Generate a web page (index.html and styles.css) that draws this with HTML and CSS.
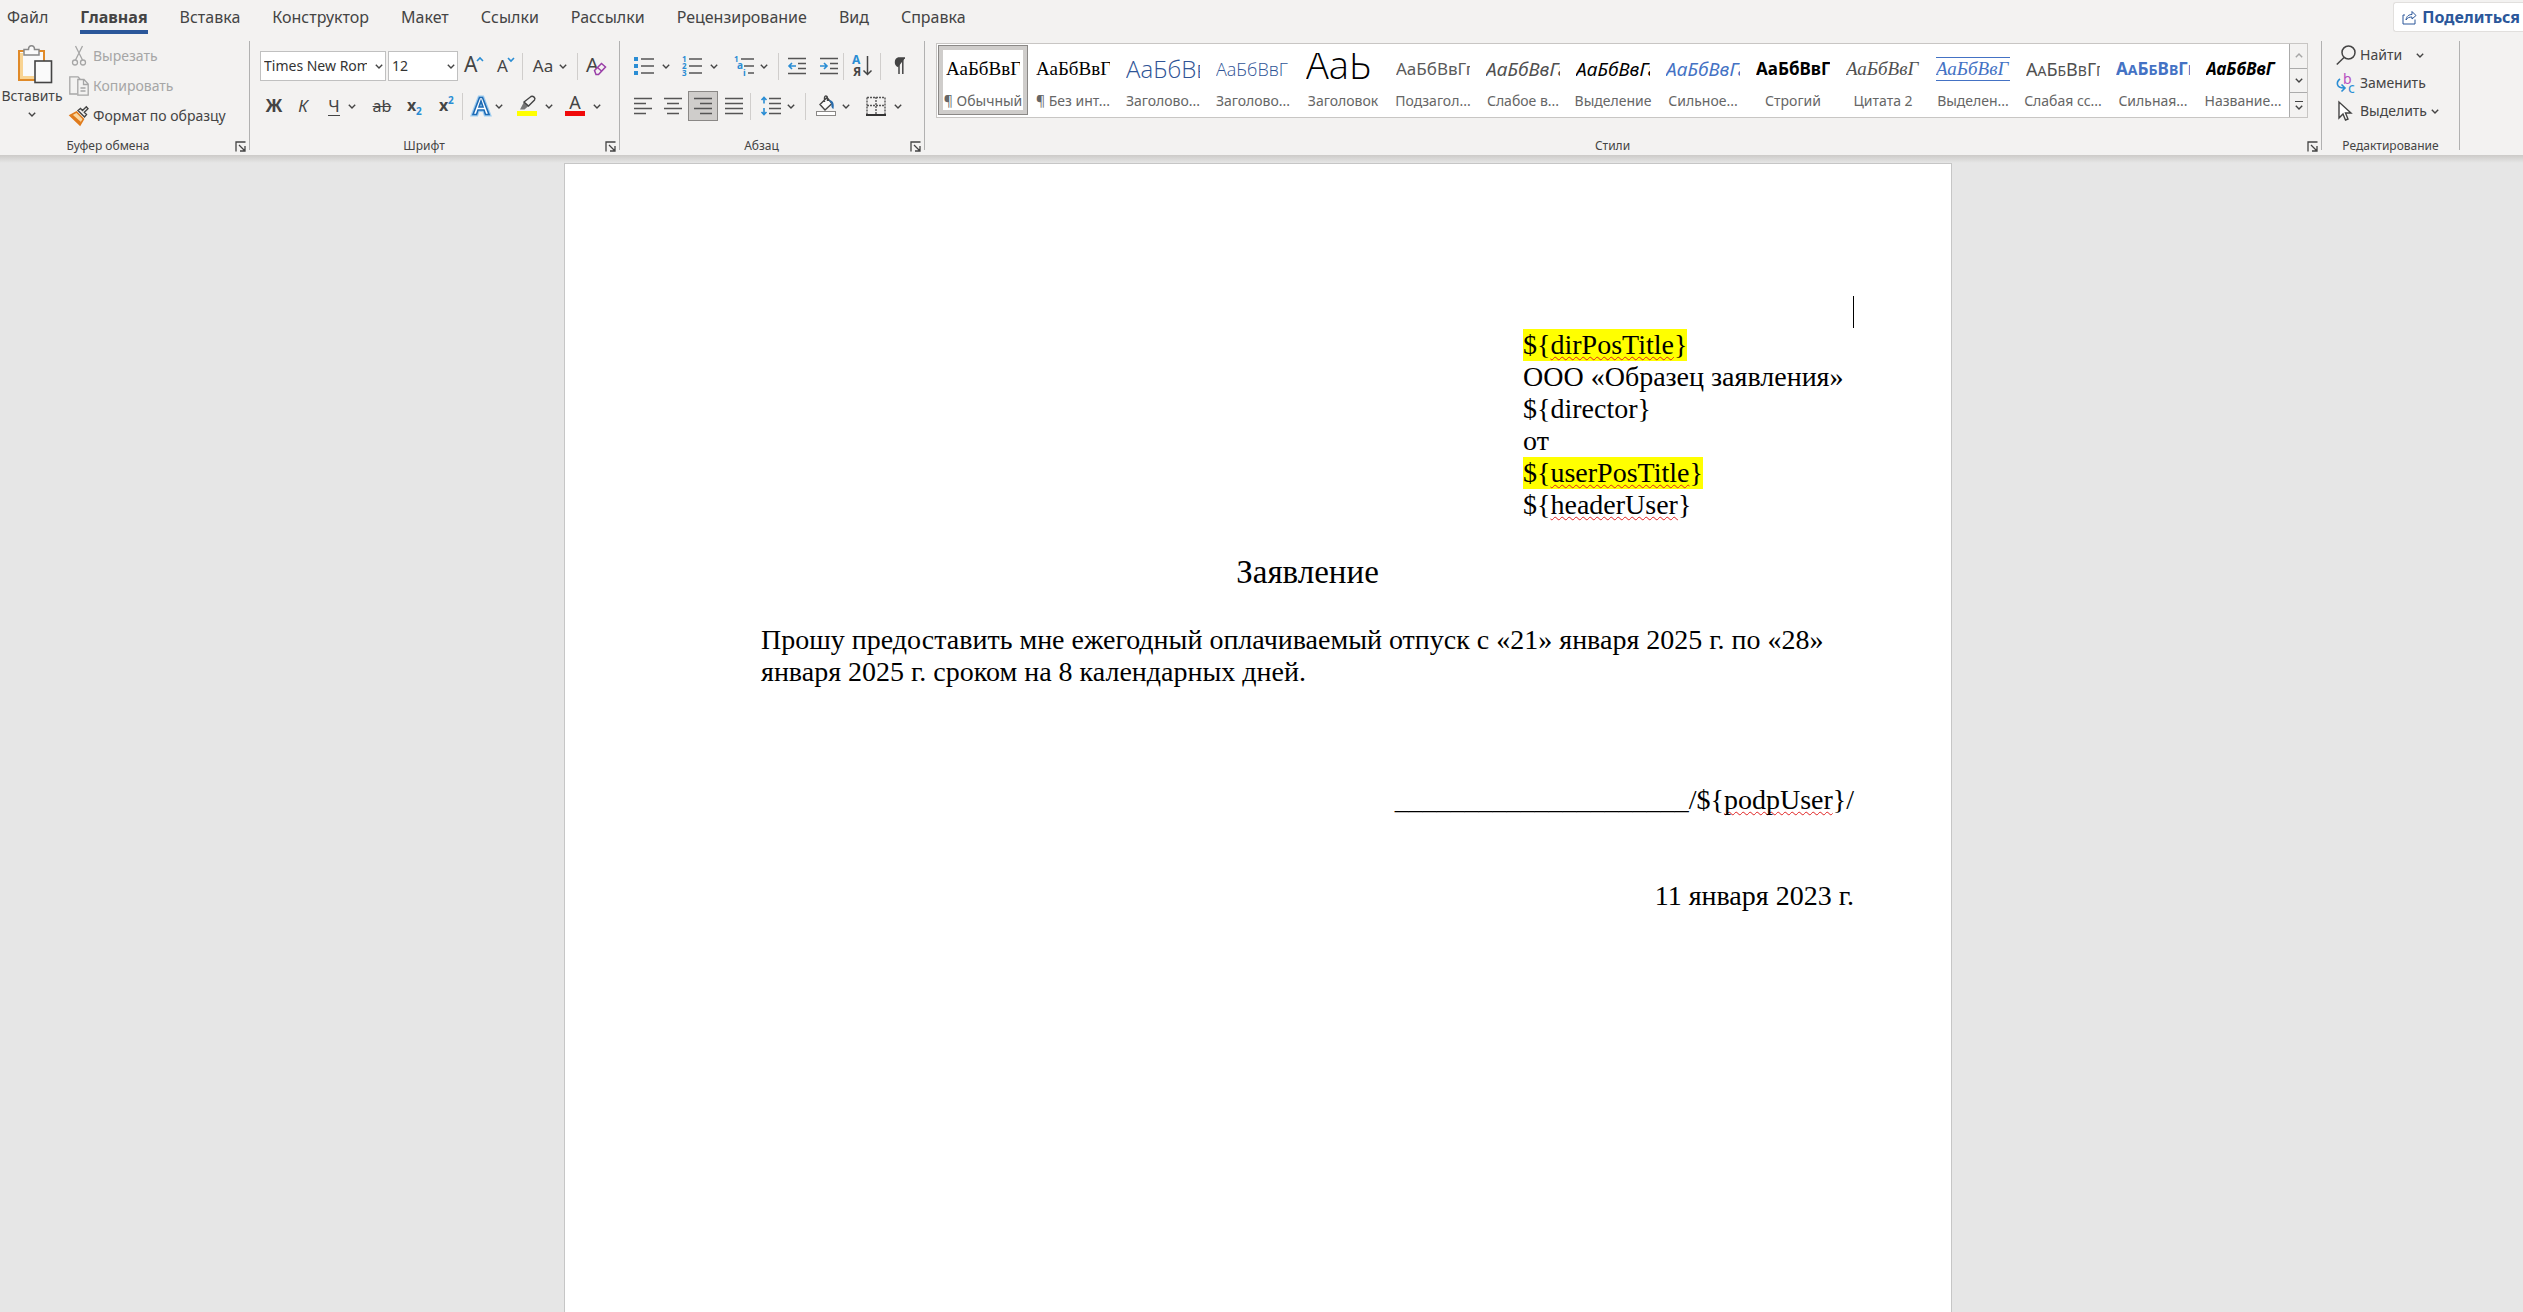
FILE: index.html
```html
<!DOCTYPE html>
<html lang="ru">
<head>
<meta charset="utf-8">
<title>Заявление</title>
<link rel="stylesheet" href="styles.css">
</head>
<body>
<svg class="sprite" aria-hidden="true">
  <symbol id="chev" viewBox="0 0 8 5"><path d="M.8 .8 4 4 7.2 .8" fill="none" stroke="currentColor" stroke-width="1.4"/></symbol>
  <symbol id="launch" viewBox="0 0 11 11"><path d="M1 10.5V1h9.5M4 4l5.500 5.500M10 5v5H5" fill="none" stroke="#444" stroke-width="1.3"/></symbol>
</svg>

<header class="tabs">
  <nav class="tab-list">
    <a href="#file">Файл</a>
    <a href="#home" class="active">Главная</a>
    <a href="#insert">Вставка</a>
    <a href="#design">Конструктор</a>
    <a href="#layout">Макет</a>
    <a href="#refs">Ссылки</a>
    <a href="#mail">Рассылки</a>
    <a href="#review">Рецензирование</a>
    <a href="#view">Вид</a>
    <a href="#help">Справка</a>
  </nav>
  <button class="share" type="button">
    <svg width="15" height="15" viewBox="0 0 15 15" fill="none" stroke="#2b579a"><path d="M3 5H1v9h12V9.500M4 10c.5-4 3-5.500 6-5.500V1.500L14 5.500 10 9V7C7.500 7 5.500 7.500 4 10z"/></svg>
    Поделиться
  </button>
</header>

<div class="ribbon">
  <section class="group clipboard">
    <div class="group-body columns">
      <button class="paste" type="button">
        <svg width="36" height="40" viewBox="0 0 36 40"><rect x="2" y="7" width="25" height="29" fill="#fafafa" stroke="#e08a28" stroke-width="2"/><path d="M4.500 9v24.500H17" fill="none" stroke="#f9d493" stroke-width="3"/><path d="M7 11V5.500h4.500c0-5 6-5 6 0H22V11z" fill="#fafafa" stroke="#888" stroke-width="1.500"/><rect x="18" y="17" width="16.500" height="21.500" fill="#fafafa" stroke="#444" stroke-width="1.600"/></svg>
        <span>Вставить</span>
        <svg class="chev"><use href="#chev"/></svg>
      </button>
      <div class="stack clip-stack">
        <button class="row-btn" type="button" disabled>
          <svg width="20" height="20" viewBox="0 0 20 20" fill="none" stroke="#a6a6a6" stroke-width="1.300"><path d="M6.500 0l7 14M13.500 0l-7 14"/><circle cx="6" cy="16.500" r="2.500"/><circle cx="14" cy="16.500" r="2.500"/></svg>
          Вырезать
        </button>
        <button class="row-btn" type="button" disabled>
          <svg width="20" height="20" viewBox="0 0 20 20" fill="none" stroke="#a6a6a6" stroke-width="1.300"><path d="M8 18H.8V.8H9L11 3M8.800 3.500H15l4.200 4.500v11.200H8.800zM14.500 3.500V8.500h4.500M11.500 12h5M11.500 15h5"/></svg>
          Копировать
        </button>
        <button class="row-btn" type="button">
          <svg width="20" height="20" viewBox="0 0 20 20"><path d="M1 9.500 7.500 6l7 7-3.500 6z" fill="#fbd7a0" stroke="#e07b1c" stroke-width="1.500"/><path d="M1 9.500l10 9.500 1-3-8-7z" fill="#e07b1c"/><path d="M9 4.500l6.500 6.500 2-2.500-2.200-2.200L19 2.800 17.300.8l-3.800 3.700L11.500 2.500z" fill="#f3f2f1" stroke="#444" stroke-width="1.400"/></svg>
          Формат по образцу
        </button>
      </div>
    </div>
    <footer><span>Буфер обмена</span><button class="launcher" type="button" aria-label="Буфер обмена: параметры"><svg><use href="#launch"/></svg></button></footer>
  </section>
  <div class="divider"></div>

  <section class="group">
    <div class="group-body rows font-rows">
      <div class="row">
        <label class="combo combo-font"><select aria-label="Шрифт"><option>Times New Roman</option></select><svg class="chev"><use href="#chev"/></svg></label>
        <label class="combo combo-size"><select aria-label="Размер шрифта"><option>12</option></select><svg class="chev"><use href="#chev"/></svg></label>
        <button class="tool" type="button" aria-label="Увеличить размер"><svg width="22" height="22" viewBox="0 0 22 22"><text class="glyph" x="1" y="17" font-size="21">A</text><path d="M14 6l3-3 3 3" fill="none" stroke="#2a8dd4" stroke-width="1.600"/></svg></button>
        <button class="tool" type="button" aria-label="Уменьшить размер"><svg width="20" height="22" viewBox="0 0 20 22"><text class="glyph" x="1" y="17" font-size="17">A</text><path d="M12 3l3 3 3-3" fill="none" stroke="#2a8dd4" stroke-width="1.600"/></svg></button>
        <i class="sep"></i>
        <button class="tool menu-l" type="button" aria-label="Регистр"><span class="case">Aa</span><svg class="chev"><use href="#chev"/></svg></button>
        <i class="sep"></i>
        <button class="tool tool-l" type="button" aria-label="Очистить формат"><svg width="22" height="22" viewBox="0 0 22 22"><text class="glyph" x="1" y="17" font-size="20">A</text><path d="M9.500 15.500l7-7 4 3.500-7 7.500h-2.500z" fill="#f3f2f1" stroke="#9a3fa8" stroke-width="1.500"/><path d="M12.500 12.500l4 3.500" stroke="#9a3fa8" stroke-width="1.500"/></svg></button>
      </div>
      <div class="row">
        <button class="tool tool-xs letter bold" type="button">Ж</button>
        <button class="tool tool-s letter italic" type="button">К</button>
        <button class="tool menu" type="button"><span class="letter under">Ч</span><svg class="chev"><use href="#chev"/></svg></button>
        <button class="tool strike" type="button">ab</button>
        <button class="tool" type="button" aria-label="Подстрочный"><svg width="18" height="22" viewBox="0 0 18 22"><text class="glyph bold" x="2" y="16" font-size="16">x</text><text class="blue-glyph" x="11" y="20" font-size="10">2</text></svg></button>
        <button class="tool" type="button" aria-label="Надстрочный"><svg width="18" height="22" viewBox="0 0 18 22"><text class="glyph bold" x="2" y="16" font-size="16">x</text><text class="blue-glyph" x="11" y="9" font-size="10">2</text></svg></button>
        <i class="sep"></i>
        <button class="tool menu snug" type="button" aria-label="Текстовые эффекты"><svg width="20" height="22" viewBox="0 0 20 22"><path d="M2 19.500L8.500 2.500h3L18 19.500h-3.500L13 15H7l-1.500 4.500zM8 12h4L10 6z" fill="none" stroke="#9fcdf0" stroke-width="4"/><path d="M2 19.500L8.500 2.500h3L18 19.500h-3.500L13 15H7l-1.500 4.500zM8 12h4L10 6z" fill="#fff" fill-rule="evenodd" stroke="#1e6bb5" stroke-width="1.600"/></svg><svg class="chev"><use href="#chev"/></svg></button>
        <button class="tool menu" type="button" aria-label="Цвет выделения"><svg width="20" height="22" viewBox="0 0 20 22"><rect y="16" width="20" height="5" fill="#ff0"/><path d="M3 14.500l4-7.500 4.500 4-4 3.500z" fill="#777"/><path d="M7 7l7-5.500c2-1 5 1.500 3.500 3.500L11.500 11z" fill="#f3f2f1" stroke="#444" stroke-width="1.400"/></svg><svg class="chev"><use href="#chev"/></svg></button>
        <button class="tool menu" type="button" aria-label="Цвет текста"><svg width="20" height="22" viewBox="0 0 20 22"><text class="glyph" x="10" y="14" text-anchor="middle" font-size="18">A</text><rect y="16" width="20" height="5" fill="#f00a0a"/></svg><svg class="chev"><use href="#chev"/></svg></button>
      </div>
    </div>
    <footer><span>Шрифт</span><button class="launcher" type="button" aria-label="Шрифт: параметры"><svg><use href="#launch"/></svg></button></footer>
  </section>
  <div class="divider"></div>

  <section class="group">
    <div class="group-body rows para-rows">
      <div class="row">
        <button class="tool menu" type="button" aria-label="Маркеры"><svg width="20" height="20" viewBox="0 0 20 20"><path d="M0 1h4v4H0zM0 8h4v4H0zM0 15h4v4H0z" fill="#2a8dd4"/><path d="M7 3h13M7 10h13M7 17h13" stroke="#555" stroke-width="1.500"/></svg><svg class="chev"><use href="#chev"/></svg></button>
        <button class="tool menu" type="button" aria-label="Нумерация"><svg width="20" height="22" viewBox="0 0 20 22"><g class="blue-glyph" font-size="8"><text x="0" y="7">1</text><text x="0" y="14">2</text><text x="0" y="21">3</text></g><path d="M7 4h13M7 11h13M7 18h13" stroke="#555" stroke-width="1.500"/></svg><svg class="chev"><use href="#chev"/></svg></button>
        <button class="tool menu-l" type="button" aria-label="Многоуровневый список"><svg width="20" height="22" viewBox="0 0 20 22"><g class="blue-glyph" font-size="8"><text x="0" y="7">1</text><text x="3" y="14" font-size="10">a</text><text x="9" y="21" font-size="9">i</text></g><path d="M7 4h13M10 11h10M14 18h6" stroke="#555" stroke-width="1.500"/></svg><svg class="chev"><use href="#chev"/></svg></button>
        <i class="sep"></i>
        <button class="tool tool-l" type="button" aria-label="Уменьшить отступ"><svg width="18" height="18" viewBox="0 0 18 18" fill="none"><path d="M0 1.500h18M10 6.500h8M10 11.500h8M0 16.500h18" stroke="#555" stroke-width="1.500"/><path d="M8 9H1M4 6L1 9l3 3" stroke="#2a8dd4" stroke-width="1.600"/></svg></button>
        <button class="tool tool-xs" type="button" aria-label="Увеличить отступ"><svg width="18" height="18" viewBox="0 0 18 18" fill="none"><path d="M0 1.500h18M10 6.500h8M10 11.500h8M0 16.500h18" stroke="#555" stroke-width="1.500"/><path d="M0 9h7M4 6l3 3-3 3" stroke="#2a8dd4" stroke-width="1.600"/></svg></button>
        <i class="sep"></i>
        <button class="tool tool-l" type="button" aria-label="Сортировка"><svg width="20" height="24" viewBox="0 0 20 24"><text class="blue-glyph" x="0" y="10" font-size="12">А</text><text class="glyph bold" x="1" y="22" font-size="12">Я</text><path d="M15.500 2v18M11.500 16.500l4 4 4-4" fill="none" stroke="#444" stroke-width="1.500"/></svg></button>
        <i class="sep"></i>
        <button class="tool tool-l" type="button" aria-label="Непечатаемые знаки"><svg width="14" height="18" viewBox="0 0 14 18"><path d="M6.500 9.500A4.500 4.500 0 0 1 6.500 1H13" fill="#444" stroke="#444" stroke-width="1.400"/><path d="M7 1v16M10.800 1v16" stroke="#444" stroke-width="1.500"/></svg></button>
      </div>
      <div class="row">
        <button class="tool tool-s" type="button" aria-label="По левому краю"><svg width="18" height="18" viewBox="0 0 18 18"><path d="M0 1.500h18M0 6.500h12M0 11.500h18M0 16.500h12" stroke="#555" stroke-width="1.500"/></svg></button>
        <button class="tool tool-s" type="button" aria-label="По центру"><svg width="18" height="18" viewBox="0 0 18 18"><path d="M0 1.500h18M3 6.500h12M0 11.500h18M3 16.500h12" stroke="#555" stroke-width="1.500"/></svg></button>
        <button class="tool tool-s selected" type="button" aria-pressed="true" aria-label="По правому краю"><svg width="18" height="18" viewBox="0 0 18 18"><path d="M0 1.500h18M6 6.500h12M0 11.500h18M6 16.500h12" stroke="#555" stroke-width="1.500"/></svg></button>
        <button class="tool" type="button" aria-label="По ширине"><svg width="18" height="18" viewBox="0 0 18 18"><path d="M0 1.500h18M0 6.500h18M0 11.500h18M0 16.500h18" stroke="#555" stroke-width="1.500"/></svg></button>
        <i class="sep"></i>
        <button class="tool menu-l" type="button" aria-label="Интервал"><svg width="20" height="20" viewBox="0 0 20 20" fill="none"><path d="M8 2.500h12M8 7.500h12M8 12.500h12M8 17.500h12" stroke="#555" stroke-width="1.500"/><path d="M3 1.500v6M3 12v6.500M.5 4L3 1.500 5.500 4M.5 16L3 18.500 5.500 16" stroke="#2a8dd4" stroke-width="1.600"/></svg><svg class="chev"><use href="#chev"/></svg></button>
        <i class="sep"></i>
        <button class="tool menu-l" type="button" aria-label="Заливка"><svg width="20" height="22" viewBox="0 0 20 22"><path d="M4 9.500l7-7 5 6-7 6.500zM8.500 7V3c0-3 3-2.500 3 0v3" fill="#fafafa" stroke="#444" stroke-width="1.400"/><path d="M13 5c4 .5 5.500 3 4.500 9-2-1-2.500-2.500-2-5z" fill="#2a6fb0"/><rect x=".5" y="16.500" width="19" height="4" fill="#fff" stroke="#8a8886"/></svg><svg class="chev"><use href="#chev"/></svg></button>
        <button class="tool menu" type="button" aria-label="Границы"><svg width="20" height="20" viewBox="0 0 20 20"><path d="M1 1.500h18v17M1 1.500v17M10 1v17M1 9.500h18" fill="none" stroke="#555" stroke-width="1.400" stroke-dasharray="2 1"/><path d="M0 19h20" stroke="#333" stroke-width="2"/></svg><svg class="chev"><use href="#chev"/></svg></button>
      </div>
    </div>
    <footer><span>Абзац</span><button class="launcher" type="button" aria-label="Абзац: параметры"><svg><use href="#launch"/></svg></button></footer>
  </section>
  <div class="divider"></div>

  <section class="group styles">
    <div class="group-body">
      <div class="gallery">
        <div class="cards">
          <button type="button" class="card current"><span class="pv serif">АаБбВвГ</span><span class="nm">¶ Обычный</span></button>
          <button type="button" class="card"><span class="pv serif">АаБбВвГ</span><span class="nm">¶ Без инт...</span></button>
          <button type="button" class="card"><span class="pv h1">АаБбВв</span><span class="nm">Заголово...</span></button>
          <button type="button" class="card"><span class="pv h2">АаБбВвГ</span><span class="nm">Заголово...</span></button>
          <button type="button" class="card"><span class="pv ttl">АаБ</span><span class="nm">Заголовок</span></button>
          <button type="button" class="card"><span class="pv sub">АаБбВвГг</span><span class="nm">Подзагол...</span></button>
          <button type="button" class="card"><span class="pv italic grey">АаБбВвГг</span><span class="nm">Слабое в...</span></button>
          <button type="button" class="card"><span class="pv italic">АаБбВвГг</span><span class="nm">Выделение</span></button>
          <button type="button" class="card"><span class="pv italic blue">АаБбВвГг</span><span class="nm">Сильное...</span></button>
          <button type="button" class="card"><span class="pv bold">АаБбВвГ</span><span class="nm">Строгий</span></button>
          <button type="button" class="card"><span class="pv serif italic grey">АаБбВвГ</span><span class="nm">Цитата 2</span></button>
          <button type="button" class="card"><span class="pv serif italic blue quote">АаБбВвГ</span><span class="nm">Выделен...</span></button>
          <button type="button" class="card"><span class="pv grey">А<small>А</small>Б<small>Б</small>В<small>В</small>Г<small>Г</small></span><span class="nm">Слабая сс...</span></button>
          <button type="button" class="card"><span class="pv bold blue">А<small>А</small>Б<small>Б</small>В<small>В</small>Г<small>Г</small></span><span class="nm">Сильная...</span></button>
          <button type="button" class="card"><span class="pv bold italic">АаБбВвГ</span><span class="nm">Название...</span></button>
        </div>
        <div class="scroller">
          <button type="button" disabled aria-label="Вверх"><svg class="chev up"><use href="#chev"/></svg></button>
          <button type="button" aria-label="Вниз"><svg class="chev"><use href="#chev"/></svg></button>
          <button type="button" aria-label="Все стили" class="more"><svg class="chev"><use href="#chev"/></svg></button>
        </div>
      </div>
    </div>
    <footer><span>Стили</span><button class="launcher" type="button" aria-label="Стили: параметры"><svg><use href="#launch"/></svg></button></footer>
  </section>
  <div class="divider"></div>

  <section class="group editing">
    <div class="group-body stack">
      <button class="row-btn find" type="button"><svg width="20" height="20" viewBox="0 0 20 20" fill="none" stroke="#444" stroke-width="1.500"><circle cx="12.500" cy="7.500" r="6.500"/><path d="M8 12.500L.8 19.500"/></svg>Найти<svg class="chev"><use href="#chev"/></svg></button>
      <button class="row-btn" type="button"><svg width="20" height="20" viewBox="0 0 20 20"><text x="7" y="11" font-size="14" fill="#b64fc0">b</text><text x="12" y="20" font-size="14" fill="#2a8dd4">c</text><path d="M4 6C0 9 0 15 8 15M5.500 11.500L9 15l-3.500 3.500" fill="none" stroke="#2a8dd4" stroke-width="1.600"/></svg>Заменить</button>
      <button class="row-btn" type="button"><svg width="20" height="20" viewBox="0 0 20 20"><path d="M3 1v16l4-4 2.500 6 2.500-1-2.500-6H15z" fill="#fff" stroke="#444" stroke-width="1.400"/></svg>Выделить<svg class="chev"><use href="#chev"/></svg></button>
    </div>
    <footer><span>Редактирование</span></footer>
  </section>
  <div class="divider"></div>
</div>

<main class="workspace">
  <article class="page">
    <p class="caret-line"><span class="caret"></span></p>
    <div class="addressee">
      <p><mark>${<span class="typo">dirPosTitle</span>}</mark></p>
      <p>ООО «Образец заявления»</p>
      <p>${director}</p>
      <p>от</p>
      <p><mark>${<span class="typo">userPosTitle</span>}</mark></p>
      <p>${<span class="typo">headerUser</span>}</p>
    </div>
    <h1>Заявление</h1>
    <p>Прошу предоставить мне ежегодный оплачиваемый отпуск с «21» января 2025 г. по «28» января 2025 г. сроком на 8 календарных дней.</p>
    <p class="signature">_____________________/${<span class="typo">podpUser</span>}/</p>
    <p class="date">11 января 2023 г.</p>
  </article>
</main>
</body>
</html>
```
FILE: styles.css
```css
* { box-sizing: border-box; }

body {
  margin: 0;
  min-height: 100vh;
  display: flex;
  flex-direction: column;
  background: #e6e6e6;
  color: #444;
  font: 14px/20px "Noto Sans", "Open Sans", sans-serif;
  overflow-x: hidden;
}

button {
  margin: 0;
  padding: 0;
  border: 0;
  background: none;
  color: inherit;
  font: inherit;
}

button:disabled { color: #a6a6a6; }
svg { flex: none; display: block; overflow: visible; }
.sprite { position: absolute; width: 0; height: 0; }
.chev { width: 8px; height: 5px; }

/* Tabs */
.tabs {
  display: flex;
  justify-content: space-between;
  align-items: flex-start;
  height: 41px;
  background: #f3f2f1;
}

.tab-list {
  display: flex;
  gap: 32px;
  padding-left: 7px;
  font-size: 16px;
  white-space: nowrap;
}

.tab-list a {
  padding-top: 3px;
  height: 34px;
  color: #444;
  text-decoration: none;
  border-bottom: 4px solid transparent;
  line-height: 28px;
}

.tab-list .active {
  font-weight: 700;
  border-bottom-color: #2b579a;
}

.share {
  display: flex;
  align-items: center;
  gap: 5px;
  margin-top: 2px;
  padding: 0 3px 0 8px;
  height: 30px;
  background: #fff;
  border: 1px solid #e1dfdd;
  border-right: 0;
  border-radius: 3px 0 0 3px;
  color: #2b579a;
  font-size: 16px;
  font-weight: 700;
}

/* Ribbon */
.ribbon {
  display: flex;
  padding-right: 63px;
  background: #f3f2f1;
}

.group {
  flex: none;
  display: flex;
  flex-direction: column;
}

.clipboard { flex-basis: 249px; }
.editing { flex-basis: 137px; }
.styles { flex: 1 1 0; min-width: 0; }

.divider {
  flex: none;
  width: 1px;
  height: 109px;
  background: #b1b1b1;
}

.group-body { height: 96px; }

.group footer {
  display: flex;
  align-items: center;
  height: 18px;
  font-size: 12px;
  line-height: 18px;
}

.group footer span {
  flex: 1;
  text-align: center;
}

.clipboard footer span { padding-right: 12px; }

.launcher { width: 21px; padding-left: 7px; }
.launcher svg { width: 11px; height: 11px; }

.columns { display: flex; }

.paste {
  display: flex;
  flex-direction: column;
  align-items: center;
  width: 64px;
  padding-top: 3px;
}

.paste span { margin: 2px 0 6px; }
.paste svg:first-child { margin-left: 6px; }

.stack {
  display: flex;
  flex-direction: column;
  align-items: flex-start;
}

.row-btn {
  display: flex;
  align-items: center;
  gap: 4px;
  height: 28px;
  white-space: nowrap;
}

.clip-stack { padding-left: 5px; }
.clip-stack .row-btn { height: 30px; }
.editing .stack { padding-left: 14px; }
.find .chev { margin-left: 10px; }

.rows {
  display: flex;
  flex-direction: column;
  gap: 10px;
  padding-top: 10px;
}

.font-rows { padding-left: 10px; padding-right: 5px; }
.para-rows { padding-left: 8px; padding-right: 7px; }

.row {
  display: flex;
  align-items: center;
  height: 30px;
}

.sep {
  width: 1px;
  height: 27px;
  background: #d0cecc;
}

.combo {
  position: relative;
  height: 30px;
}

.combo-font { width: 126px; margin-right: 2px; }
.combo-size { width: 70px; }

.combo select {
  appearance: none;
  width: 100%;
  height: 100%;
  padding: 0 18px 0 3px;
  border: 1px solid #c0c0c0;
  border-radius: 0;
  background: #fff;
  color: #333;
  font: inherit;
}

.combo .chev {
  position: absolute;
  top: 13px;
  right: 3px;
}

.tool {
  display: flex;
  align-items: center;
  justify-content: center;
  gap: 8px;
  width: 32px;
  height: 30px;
}

.tool-xs { width: 28px; }
.tool-s { width: 30px; }
.tool-l { width: 36px; }
.menu { width: 48px; }
.menu-l { width: 54px; gap: 6px; }
.snug { gap: 4px; }

.selected {
  background: #cfcdcb;
  border: 1px solid #8a8886;
}

.glyph { fill: #444; }
.blue-glyph { fill: #2a8dd4; font-weight: 700; }

.case { font-size: 17px; }
.letter { font-size: 17px; }
.bold { font-weight: 700; }
.italic { font-style: italic; }
.under { line-height: 18px; border-bottom: 1px solid #444; }
.strike { font-size: 16px; text-decoration: line-through 1px; }

/* Style gallery */
.gallery {
  display: flex;
  height: 75px;
  margin: 2px 13px 0 11px;
  background: #fff;
  border: 1px solid #c8c6c4;
}

.cards {
  flex: 1;
  min-width: 0;
  display: flex;
  padding: 1px 0 1px 1px;
  overflow: hidden;
}

.card {
  flex: none;
  display: flex;
  flex-direction: column;
  align-items: center;
  width: 90px;
  height: 70px;
  padding-top: 8px;
}

.card.current {
  box-shadow: inset 0 0 0 1px #8a8886, inset 0 0 0 5px #cfcdcb;
}

.pv {
  width: 74px;
  height: 32px;
  overflow: hidden;
  color: #000;
  font-size: 18px;
  line-height: 32px;
  text-align: left;
  white-space: nowrap;
}

.pv small { font-size: 14px; }
.pv.italic { font-size: 19px; }
.pv.serif { font-family: "Liberation Serif", serif; font-size: 19px; }
.pv.h1 { font-family: "Open Sans", sans-serif; font-size: 24px; font-weight: 300; color: #2f5496; }
.pv.h2 { font-family: "Open Sans", sans-serif; font-weight: 300; color: #2f5496; }
.pv.ttl { font-family: "Open Sans", sans-serif; font-size: 38px; font-weight: 300; line-height: 22px; }
.pv.sub { font-size: 17px; color: #5a5a5a; }
.pv.bold { font-size: 17px; }
.pv.grey { color: #505050; }
.pv.blue { color: #4472c4; }

.pv.quote {
  height: 24px;
  margin: 4px 0;
  line-height: 22px;
  border-top: 1px solid #4472c4;
  border-bottom: 1px solid #4472c4;
}

.nm {
  margin-top: 6px;
  color: #666;
  white-space: nowrap;
}

.scroller {
  display: flex;
  flex-direction: column;
  width: 18px;
}

.scroller button {
  flex: 1;
  display: flex;
  flex-direction: column;
  align-items: center;
  justify-content: center;
  background: #f3f2f1;
  border-left: 1px solid #ababab;
}

.scroller button + button { border-top: 1px solid #ababab; }
.up { transform: rotate(180deg); }
.more::before { content: ""; width: 8px; height: 1px; margin-bottom: 3px; background: #444; }

/* Document */
.workspace {
  flex: 1;
  display: flex;
  justify-content: center;
  padding: 8px 7px 0 0;
  background: linear-gradient(#cccac8, #e6e6e6 8px);
}

.page {
  width: 100%;
  max-width: 1388px;
  padding: 132px 97px 0 196px;
  background: #fff;
  border: 1px solid #c6c6c6;
  border-bottom: 0;
  color: #000;
  font: 28px/32px "Liberation Serif", "Times New Roman", serif;
}

.page p { margin: 0; }

.caret-line {
  display: flex;
  justify-content: flex-end;
  padding-bottom: 1px;
}

.caret {
  width: 1px;
  height: 32px;
  background: #000;
}

.addressee {
  display: flow-root;
  width: 331px;
  margin-left: auto;
  white-space: nowrap;
}

.page mark { display: inline-block; background: #ff0; color: inherit; }

.typo {
  text-decoration: underline wavy #e02020 1px;
  text-decoration-skip-ink: none;
  text-underline-offset: 2px;
}

.page h1 {
  margin: 32px 0 33px;
  font-size: 33px;
  font-weight: 400;
  line-height: 38px;
  text-align: center;
}

.page .signature { margin-top: 96px; text-align: right; }
.page .date { margin-top: 64px; text-align: right; }
```
